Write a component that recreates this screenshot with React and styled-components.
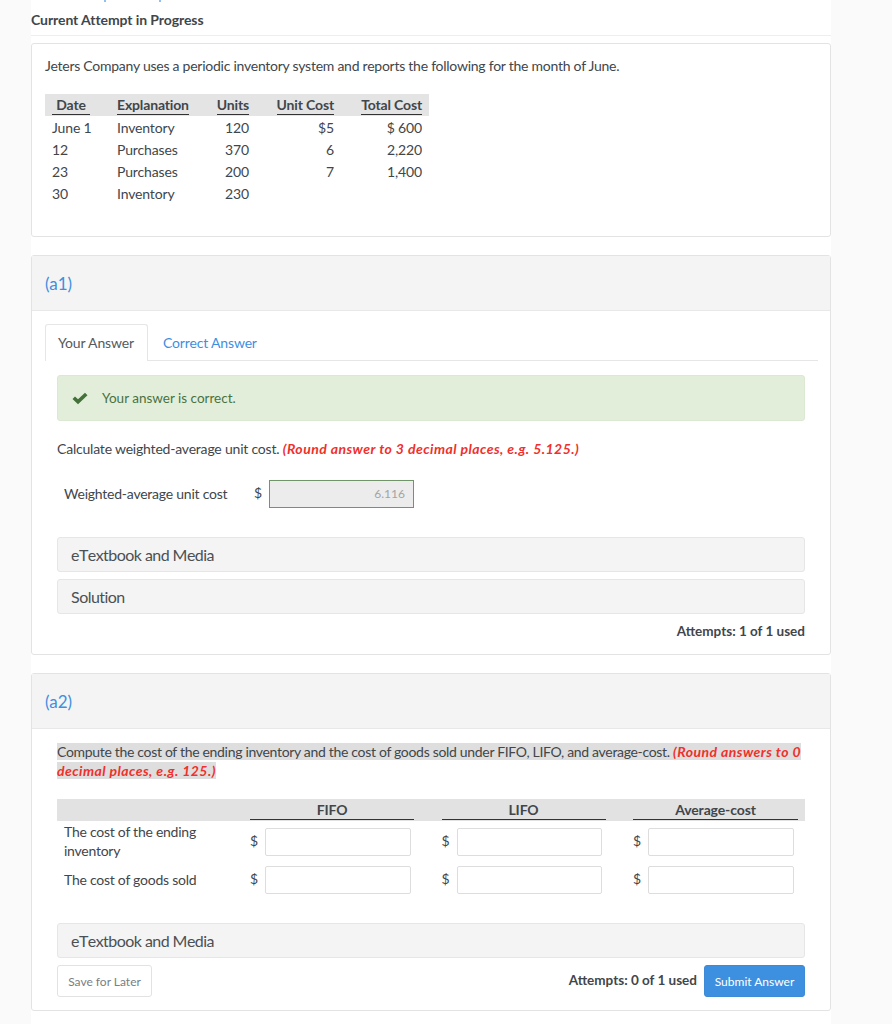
import React from 'react';
import styled, { createGlobalStyle } from 'styled-components';

const GlobalStyle = createGlobalStyle`
  html, body {
    margin: 0;
    padding: 0;
    background: #fafafa;
    font-family: Lato, "Open Sans", sans-serif;
    color: #41464b;
  }
`;

const Page = styled.div`
  width: 800px;
  height: 1024px;
  margin-left: 31px;
  background: #fff;
  overflow: hidden;
`;

const TopCrop = styled.div`
  display: flex;
  height: 2px;
`;

const Tick = styled.i`
  width: 2px;
  height: 2px;
  margin-left: ${(p) => p.$left}px;
  background: #8fc0ee;
`;

const Heading = styled.div`
  box-sizing: border-box;
  height: 34px;
  padding-top: 10px;
  font-size: 14px;
  line-height: 16px;
  font-weight: 700;
  letter-spacing: -0.08px;
  border-bottom: 1px solid #eeeeee;
  margin-bottom: 7px;
`;

const Card = styled.section`
  box-sizing: border-box;
  height: ${(p) => p.$height}px;
  margin-bottom: 18px;
  border: 1px solid #e3e3e3;
  border-radius: 3px;
  background: #fff;
`;

const Intro = styled.p`
  margin: 0;
  padding: 13px 13px 0;
  font-size: 14px;
  line-height: 18px;
  letter-spacing: -0.25px;
`;

const DataTable = styled.table`
  margin: 19px 0 0 13px;
  width: 384px;
  table-layout: fixed;
  border-collapse: collapse;
  font-size: 14px;
  letter-spacing: -0.15px;
`;

const HeadCell = styled.th`
  background: #e4e4e4;
  height: 22px;
  padding: 0 ${(p) => (p.$wide ? 20 : 7)}px 0 7px;
  font-weight: 700;
  text-align: ${(p) => p.$align || 'left'};
  width: ${(p) => p.$width}px;
  box-sizing: border-box;
  span {
    display: inline-block;
    min-width: ${(p) => (p.$wide ? 38 : 0)}px;
    text-align: center;
    border-bottom: 1px solid #333;
    line-height: 18px;
  }
`;

const Cell = styled.td`
  height: 22px;
  padding: 0 7px;
  text-align: ${(p) => p.$align || 'left'};
`;

const CardHead = styled.header`
  box-sizing: border-box;
  height: 55px;
  padding: 0 13px;
  display: flex;
  align-items: center;
  background: #f4f4f4;
  border-bottom: 1px solid #e8e8e8;
  color: #3d8fdf;
  font-size: 17px;
`;

const Tabs = styled.nav`
  display: flex;
  margin: 13px 12px 0 13px;
  height: 36px;
  border-bottom: 1px solid #e6e6e6;
`;

const Tab = styled.div`
  box-sizing: border-box;
  height: 36px;
  padding: 0 ${(p) => (p.$active ? 13 : 15)}px ${(p) => (p.$active ? 1 : 0)}px ${(p) => (p.$active ? 12 : 15)}px;
  display: flex;
  align-items: center;
  font-size: 14px;
  letter-spacing: -0.15px;
  color: ${(p) => (p.$active ? '#555a5e' : '#3d8fdf')};
  ${(p) => p.$active && `
    background: #fff;
    border: 1px solid #e6e6e6;
    border-bottom: 0;
    border-radius: 3px 3px 0 0;
    height: 37px;
  `}
`;

const Alert = styled.div`
  display: flex;
  align-items: center;
  box-sizing: border-box;
  height: 46px;
  margin: 14px 25px 0;
  padding: 0 14px;
  background: #e2eeda;
  border: 1px solid #dbe8d2;
  border-radius: 3px;
  color: #4a7140;
  font-size: 13.5px;
  gap: 14px;
`;

const Body = styled.div`
  padding: 0 25px;
`;

const Question = styled.p`
  margin: 0;
  padding-top: ${(p) => p.$top}px;
  font-size: 14px;
  line-height: 18.7px;
  letter-spacing: -0.2px;
`;

const Mark = styled.span`
  background: #dedede;
  letter-spacing: -0.315px;
  box-decoration-break: clone;
  -webkit-box-decoration-break: clone;
`;

const Hint = styled.em`
  color: #f0302a;
  font-weight: 700;
  font-style: italic;
  letter-spacing: 0.45px;
`;

const AnswerRow = styled.div`
  display: flex;
  align-items: center;
  margin-top: 21px;
  padding-left: 7px;
  font-size: 14px;
  letter-spacing: -0.23px;
`;

const AnswerLabel = styled.span`
  width: 190px;
`;

const Dollar = styled.span`
  width: 15px;
  font-size: 14px;
  letter-spacing: 0;
  position: relative;
  top: -1px;
`;

const Filled = styled.div`
  box-sizing: border-box;
  width: 145px;
  height: 28px;
  padding: 0 8px;
  display: flex;
  align-items: center;
  justify-content: flex-end;
  background: #ececec;
  border: 1px solid #6f9568;
  font-size: 12px;
  letter-spacing: 0;
  color: #a4a4a4;
`;

const Drawer = styled.div`
  box-sizing: border-box;
  height: 35px;
  margin-top: ${(p) => p.$top}px;
  padding: 0 13px;
  display: flex;
  align-items: center;
  background: #f4f4f4;
  border: 1px solid #e6e6e6;
  border-radius: 3px;
  font-size: 16px;
  font-kerning: none;
  letter-spacing: -0.55px;
  color: #4b5054;
`;

const Attempts = styled.div`
  font-size: 13.5px;
  font-weight: 700;
  white-space: nowrap;
  padding-bottom: ${(p) => (p.$raised ? 2 : 0)}px;
`;

const AttemptsRow = styled.div`
  display: flex;
  justify-content: flex-end;
  padding-top: 9px;
`;

const CostGrid = styled.div`
  display: grid;
  grid-template-columns: 186px 191.5px 191.5px 179px;
  margin-top: 19px;
  font-size: 14px;
  letter-spacing: -0.25px;
`;

const CostHead = styled.div`
  height: 22px;
  background: #e2e2e2;
  padding: 0 ${(p) => (p.$last ? 7 : 20.5)}px 0 7px;
  span {
    display: block;
    height: 20px;
    line-height: 22px;
    text-align: center;
    font-weight: 700;
    letter-spacing: -0.12px;
    border-bottom: 1px solid #333;
  }
`;

const CostLabel = styled.div`
  padding: ${(p) => (p.$first ? '2px 7px 0.6px' : '10px 7px 0')};
  line-height: 18.7px;
`;

const CostEntry = styled.div`
  display: flex;
  align-items: flex-start;
  padding: ${(p) => (p.$first ? 7 : 5)}px 0 0 7px;
  ${Dollar} {
    top: 4px;
  }
`;

const CostInput = styled.input`
  box-sizing: border-box;
  width: 145.5px;
  height: 28px;
  padding: 0;
  background: #fff;
  border: 1px solid #dddddd;
  border-radius: 2px;
`;

const Footer = styled.div`
  display: flex;
  align-items: center;
  justify-content: space-between;
  margin-top: 7px;
`;

const SaveButton = styled.button`
  box-sizing: border-box;
  width: 95px;
  height: 32px;
  padding: 0;
  background: #fff;
  border: 1px solid #e2e2e2;
  border-radius: 3px;
  font-family: inherit;
  font-size: 12px;
  color: #7a7e82;
`;

const SubmitButton = styled.button`
  box-sizing: border-box;
  width: 101px;
  height: 32px;
  padding: 0;
  background: #3d8fdf;
  border: 1px solid #3d8ad6;
  border-radius: 3px;
  font-family: inherit;
  font-size: 12px;
  color: #fff;
`;

const FooterRight = styled.div`
  display: flex;
  align-items: center;
  gap: 7px;
`;

const rows = [
  ['June 1', 'Inventory', '120', '$5', '$ 600'],
  ['12', 'Purchases', '370', '6', '2,220'],
  ['23', 'Purchases', '200', '7', '1,400'],
  ['30', 'Inventory', '230', '', ''],
];

function Check() {
  return (
    <svg width="16" height="13" viewBox="0 0 16 13" fill="#44703a">
      <path d="M0.5 7 L3 4.4 L6 7.3 L13 0.8 L15.5 3.3 L6 12.3 Z" />
    </svg>
  );
}

function CostRow({ label, first }) {
  return (
    <>
      <CostLabel $first={first}>{label}</CostLabel>
      {[0, 1, 2].map((i) => (
        <CostEntry key={i} $first={first}>
          <Dollar>$</Dollar>
          <CostInput />
        </CostEntry>
      ))}
    </>
  );
}

export default function App() {
  return (
    <Page>
      <GlobalStyle />
      <TopCrop>
        <Tick $left={73} />
        <Tick $left={53} />
      </TopCrop>
      <Heading>Current Attempt in Progress</Heading>

      <Card $height={194}>
        <Intro>Jeters Company uses a periodic inventory system and reports the following for the month of June.</Intro>
        <DataTable>
          <thead>
            <tr>
              <HeadCell $width={65} $wide><span>Date</span></HeadCell>
              <HeadCell $width={87}><span>Explanation</span></HeadCell>
              <HeadCell $width={59} $align="right"><span>Units</span></HeadCell>
              <HeadCell $width={85} $align="right"><span>Unit Cost</span></HeadCell>
              <HeadCell $width={88} $align="right"><span>Total Cost</span></HeadCell>
            </tr>
          </thead>
          <tbody>
            {rows.map((r) => (
              <tr key={r[0]}>
                <Cell>{r[0]}</Cell>
                <Cell>{r[1]}</Cell>
                <Cell $align="right">{r[2]}</Cell>
                <Cell $align="right">{r[3]}</Cell>
                <Cell $align="right">{r[4]}</Cell>
              </tr>
            ))}
          </tbody>
        </DataTable>
      </Card>

      <Card $height={400}>
        <CardHead>(a1)</CardHead>
        <Tabs>
          <Tab $active>Your Answer</Tab>
          <Tab>Correct Answer</Tab>
        </Tabs>
        <Alert><Check />Your answer is correct.</Alert>
        <Body>
          <Question $top={19}>
            Calculate weighted-average unit cost. <Hint>(Round answer to 3 decimal places, e.g. 5.125.)</Hint>
          </Question>
          <AnswerRow>
            <AnswerLabel>Weighted-average unit cost</AnswerLabel>
            <Dollar>$</Dollar>
            <Filled>6.116</Filled>
          </AnswerRow>
          <Drawer $top={29}>eTextbook and Media</Drawer>
          <Drawer $top={7}>Solution</Drawer>
          <AttemptsRow><Attempts>Attempts: 1 of 1 used</Attempts></AttemptsRow>
        </Body>
      </Card>

      <Card $height={338}>
        <CardHead>(a2)</CardHead>
        <Body>
          <Question $top={14}>
            <Mark>
              Compute the cost of the ending inventory and the cost of goods sold under FIFO, LIFO, and average-cost. <Hint>(Round answers to 0</Hint> <Hint>decimal places, e.g. 125.)</Hint>
            </Mark>
          </Question>
          <CostGrid>
            <CostHead />
            <CostHead><span>FIFO</span></CostHead>
            <CostHead><span>LIFO</span></CostHead>
            <CostHead $last><span>Average-cost</span></CostHead>
            <CostRow first label="The cost of the ending inventory" />
            <CostRow label="The cost of goods sold" />
          </CostGrid>
          <Drawer $top={29}>eTextbook and Media</Drawer>
          <Footer>
            <SaveButton>Save for Later</SaveButton>
            <FooterRight>
              <Attempts $raised>Attempts: 0 of 1 used</Attempts>
              <SubmitButton>Submit Answer</SubmitButton>
            </FooterRight>
          </Footer>
        </Body>
      </Card>
    </Page>
  );
}
